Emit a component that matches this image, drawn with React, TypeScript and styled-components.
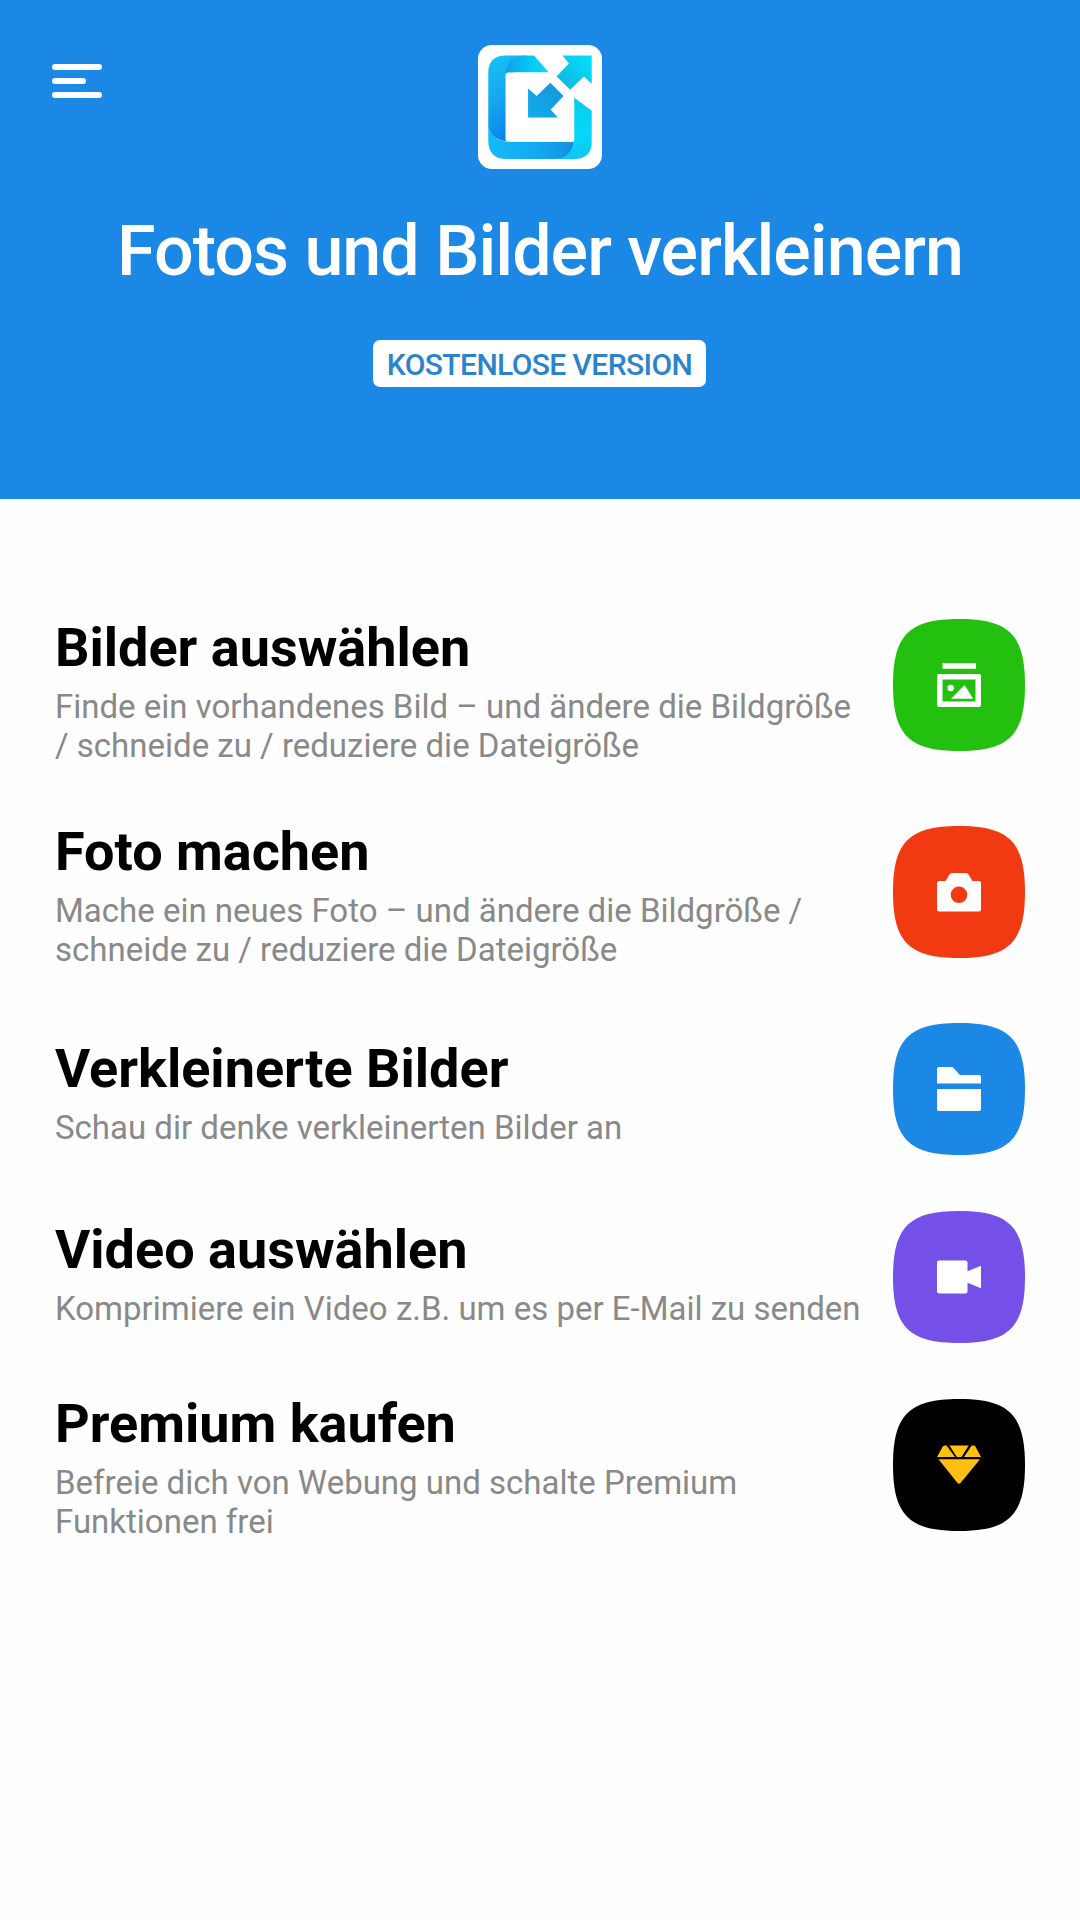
import React from "react";
import styled, { createGlobalStyle } from "styled-components";

const GlobalStyle = createGlobalStyle`
  * { box-sizing: border-box; }
  body { margin: 0; background: #fefefe; font-family: Roboto, "Liberation Sans", sans-serif; }
`;

const Screen = styled.main`
  width: 1080px;
  height: 1920px;
  background: #fefefe;
  overflow: hidden;
`;

const Header = styled.header`
  position: relative;
  height: 499px;
  padding-top: 45px;
  background: #1c88e5;
  display: flex;
  flex-direction: column;
  align-items: center;
`;

const MenuButton = styled.button`
  position: absolute;
  left: 52px;
  top: 64px;
  padding: 0;
  border: 0;
  background: none;
  display: flex;
  flex-direction: column;
  gap: 8px;
`;

const MenuBar = styled.span<{ $width: number }>`
  width: ${(p) => p.$width}px;
  height: 6px;
  border-radius: 3px;
  background: #fff;
`;

const LogoSvg = styled.svg`
  display: block;
  width: 124px;
  height: 124px;
`;

const AppTitle = styled.h1`
  margin: 41px 0 0;
  font-size: 70px;
  line-height: 82px;
  font-weight: 500;
  letter-spacing: -0.98px;
  color: #fff;
  white-space: nowrap;
`;

const Badge = styled.div`
  width: 333px;
  height: 47px;
  margin: 48px 1px 0 0;
  padding-top: 2px;
  border-radius: 7px;
  background: #fff;
  color: #2b83cb;
  display: flex;
  align-items: center;
  justify-content: center;
  font-size: 30px;
  line-height: 36px;
  font-weight: 500;
  letter-spacing: -0.6px;
  white-space: nowrap;
`;

const Menu = styled.nav`
  padding: 117px 55px 0;
`;

const Row = styled.div<{ $height: number }>`
  height: ${(p) => p.$height}px;
  display: flex;
  align-items: flex-start;
  justify-content: space-between;
`;

const RowText = styled.div<{ $drop: number }>`
  padding-top: ${(p) => p.$drop}px;
  white-space: nowrap;
`;

const RowTitle = styled.h2`
  margin: 0 0 8px;
  font-size: 54px;
  line-height: 63px;
  font-weight: 700;
  color: #000;
`;

const RowInfo = styled.p`
  margin: 0;
  font-size: 33px;
  line-height: 39px;
  color: #898989;
`;

const Tile = styled.svg<{ $drop: number }>`
  flex: none;
  width: 132px;
  height: 132px;
  margin-top: ${(p) => p.$drop}px;
`;

const Logo = () => (
  <LogoSvg viewBox="53 43 374 374">
    <defs>
      <linearGradient id="left" x1="0" y1="0" x2="0.35" y2="1">
        <stop offset="0" stopColor="#14c6f4" />
        <stop offset="0.5" stopColor="#16a8f0" />
        <stop offset="1" stopColor="#0b82ea" />
      </linearGradient>
      <linearGradient id="top" x1="0" y1="0" x2="1" y2="0">
        <stop offset="0" stopColor="#0fa0e8" />
        <stop offset="0.6" stopColor="#08c8f6" />
        <stop offset="1" stopColor="#06dcfa" />
      </linearGradient>
      <linearGradient id="bottom" x1="0" y1="0" x2="1" y2="0">
        <stop offset="0" stopColor="#14baf8" />
        <stop offset="0.6" stopColor="#12a8f0" />
        <stop offset="1" stopColor="#1190dc" />
      </linearGradient>
      <linearGradient id="right" x1="0.5" y1="0" x2="0.5" y2="1">
        <stop offset="0" stopColor="#0bcaec" />
        <stop offset="0.6" stopColor="#05d8fa" />
        <stop offset="1" stopColor="#10c4f4" />
      </linearGradient>
      <linearGradient id="out" x1="0" y1="1" x2="1" y2="0">
        <stop offset="0" stopColor="#14b0e0" />
        <stop offset="1" stopColor="#02e2fc" />
      </linearGradient>
      <linearGradient id="in" x1="0" y1="1" x2="1" y2="0">
        <stop offset="0" stopColor="#12acec" />
        <stop offset="1" stopColor="#1594de" />
      </linearGradient>
    </defs>
    <rect x="53" y="43" width="374" height="374" rx="42" fill="#fff" />
    <path d="M84 280V127Q84 75 138 75H200L150 140V336Q84 330 84 280Z" fill="url(#left)" />
    <path d="M136 128Q143 75 196 75H222L267 126H150V140H136Z" fill="url(#top)" />
    <path d="M84 276Q92 334 146 335H343Q335 387 286 387H140Q84 387 84 330Z" fill="url(#bottom)" />
    <path d="M343 201L396 241V335Q396 387 342 387H284Q337 383 343 330Z" fill="url(#right)" />
    <rect x="136" y="126" width="207" height="209" rx="9" fill="#fff" />
    <path d="M308 75H396V161L373 138L331 178L290 138L327 99Z" fill="url(#out)" />
    <path d="M204 174L230 197L271 157L311 197L272 238L294 262H204Z" fill="url(#in)" />
  </LogoSvg>
);

const GalleryGlyph = () => (
  <>
    <path d="M49.5 44.2H83V49.7H49.5Z" />
    <path
      fillRule="evenodd"
      d="M46 55H86Q88 55 88 57V86Q88 88 86 88H46Q44 88 44 86V57Q44 55 46 55ZM49.5 60.5V82.5H82.5V60.5Z"
    />
    <circle cx="57.7" cy="69" r="3.2" />
    <path d="M58 79.8L71.5 66L80.2 79.8Z" />
  </>
);

const CameraGlyph = () => (
  <path
    fillRule="evenodd"
    d="M59 47H73Q74.5 47 75.3 48.3L79.5 55H86Q88 55 88 57V83.5Q88 85.5 86 85.5H46Q44 85.5 44 83.5V57Q44 55 46 55H52.5L56.7 48.3Q57.5 47 59 47ZM66 60.5A8.3 8.3 0 1 0 66 77.1A8.3 8.3 0 1 0 66 60.5Z"
  />
);

const FolderGlyph = () => (
  <>
    <path d="M46 44H59.5L67 52H86Q88 52 88 54V60.5H44V46Q44 44 46 44Z" />
    <path d="M44 66H88V86Q88 88 86 88H46Q44 88 44 86Z" />
  </>
);

const VideoGlyph = () => (
  <path d="M46 49.5H72.5Q74.5 49.5 74.5 51.5V60.3L88 54.8V77.2L74.5 71.8V80.5Q74.5 82.5 72.5 82.5H46Q44 82.5 44 80.5V51.5Q44 49.5 46 49.5Z" />
);

const DiamondGlyph = () => (
  <>
    <path d="M51.5 46.5H53.5L62 58H44L49.8 47.5Z" />
    <path d="M56.5 46.5H75.7L68.5 58H63.8Z" />
    <path d="M78.7 46.5H80.5Q81.8 46.5 82.4 47.5L88 58H71Z" />
    <path d="M45.5 60.3H87L67.5 84Q66 85.5 64.5 84Z" />
  </>
);

type Entry = {
  title: string;
  lines: string[];
  height: number;
  textDrop: number;
  tileDrop: number;
  color: string;
  glyphColor: string;
  Glyph: () => React.ReactElement;
};

const entries: Entry[] = [
  {
    title: "Bilder auswählen",
    lines: ["Finde ein vorhandenes Bild – und ändere die Bildgröße", "/ schneide zu / reduziere die Dateigröße"],
    height: 204, textDrop: 0, tileDrop: 3, color: "#24c010", glyphColor: "#fff", Glyph: GalleryGlyph,
  },
  {
    title: "Foto machen",
    lines: ["Mache ein neues Foto – und ändere die Bildgröße /", "schneide zu / reduziere die Dateigröße"],
    height: 203, textDrop: 0, tileDrop: 6, color: "#f23a12", glyphColor: "#fff", Glyph: CameraGlyph,
  },
  {
    title: "Verkleinerte Bilder",
    lines: ["Schau dir denke verkleinerten Bilder an"],
    height: 188, textDrop: 14, tileDrop: 0, color: "#1c88e5", glyphColor: "#fff", Glyph: FolderGlyph,
  },
  {
    title: "Video auswählen",
    lines: ["Komprimiere ein Video z.B. um es per E-Mail zu senden"],
    height: 181, textDrop: 7, tileDrop: 0, color: "#7550e8", glyphColor: "#fff", Glyph: VideoGlyph,
  },
  {
    title: "Premium kaufen",
    lines: ["Befreie dich von Webung und schalte Premium", "Funktionen frei"],
    height: 150, textDrop: 0, tileDrop: 7, color: "#000", glyphColor: "#ffc010", Glyph: DiamondGlyph,
  },
];

export default function App() {
  return (
    <Screen>
      <GlobalStyle />
      <Header>
        <MenuButton aria-label="Menü">
          <MenuBar $width={50} />
          <MenuBar $width={34} />
          <MenuBar $width={50} />
        </MenuButton>
        <Logo />
        <AppTitle>Fotos und Bilder verkleinern</AppTitle>
        <Badge>KOSTENLOSE VERSION</Badge>
      </Header>
      <Menu>
        {entries.map(({ title, lines, height, textDrop, tileDrop, color, glyphColor, Glyph }) => (
          <Row key={title} $height={height}>
            <RowText $drop={textDrop}>
              <RowTitle>{title}</RowTitle>
              {lines.map((line) => (
                <RowInfo key={line}>{line}</RowInfo>
              ))}
            </RowText>
            <Tile viewBox="0 0 132 132" $drop={tileDrop}>
              <path d="M0 66C0 16 16 0 66 0S132 16 132 66S116 132 66 132S0 116 0 66Z" fill={color} />
              <g fill={glyphColor}>
                <Glyph />
              </g>
            </Tile>
          </Row>
        ))}
      </Menu>
    </Screen>
  );
}
